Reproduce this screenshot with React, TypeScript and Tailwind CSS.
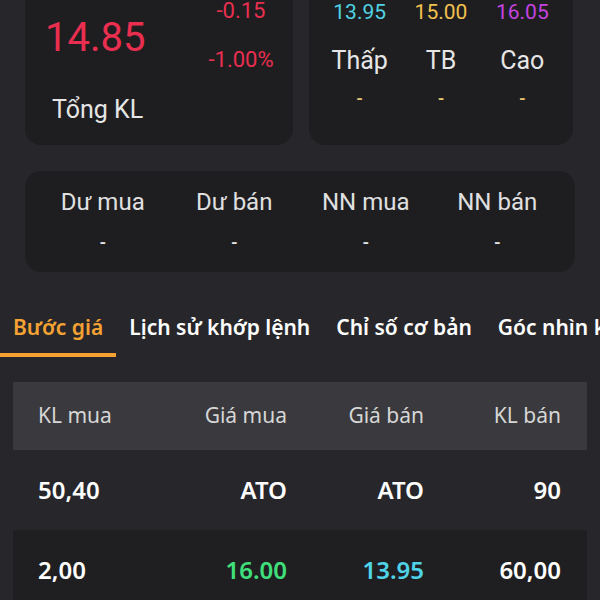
const stats = [
  { label: "Thấp", value: "13.95", color: "text-[#4fd3e3]" },
  { label: "TB", value: "15.00", color: "text-[#f2c14e]" },
  { label: "Cao", value: "16.05", color: "text-[#c543e0]" },
];

const extras = ["Dư mua", "Dư bán", "NN mua", "NN bán"];

const tabs = ["Bước giá", "Lịch sử khớp lệnh", "Chỉ số cơ bản", "Góc nhìn kỹ thuật"];

const rows = [
  { klMua: "50,40", giaMua: "ATO", giaBan: "ATO", klBan: "90", muaColor: "text-white", banColor: "text-white", dark: false },
  { klMua: "2,00", giaMua: "16.00", giaBan: "13.95", klBan: "60,00", muaColor: "text-[#3fe07c]", banColor: "text-[#4fd3e8]", dark: true },
];

export default function App() {
  return (
    <div className="h-[600px] w-[600px] overflow-hidden bg-[#27272b] font-['Roboto',sans-serif]">
      <div className="-mt-[30px] flex gap-4 pl-[25px] pr-[27px]">
        <div className="flex h-[175px] w-[268px] flex-col rounded-2xl bg-[#1e1e21] pl-[20px] pr-[12px] pt-[30px]">
          <div className="flex items-start justify-between">
            <span className="mt-[18px] text-[40px] leading-none text-[#ea2e4f]">14.85</span>
            <div className="flex w-[80px] flex-col items-center gap-[27px] text-[22px] leading-none text-[#ea2e4f]">
              <span>-0.15</span>
              <span>-1.00%</span>
            </div>
          </div>
          <span className="mt-[26px] pl-[7px] text-[25px] leading-none text-[#e6e6e6]">Tổng KL</span>
        </div>
        <div className="flex h-[175px] flex-1 flex-col rounded-2xl bg-[#1e1e21] px-[10px] pt-[32px]">
          <div className="grid grid-cols-3">
            {stats.map((s) => (
              <div key={s.label} className="flex flex-col items-center">
                <span className={`text-[21px] leading-none ${s.color}`}>{s.value}</span>
                <span className="mt-[25px] text-[25px] leading-none text-[#e6e6e6]">{s.label}</span>
                <span className="mt-[17px] text-[17px] font-bold leading-none text-[#e3c46e]">-</span>
              </div>
            ))}
          </div>
        </div>
      </div>

      <div className="mx-[25px] mt-[26px] grid h-[101px] grid-cols-4 rounded-2xl bg-[#1e1e21] px-3 pt-[19px]">
        {extras.map((e) => (
          <div key={e} className="flex flex-col items-center">
            <span className="text-[24px] leading-none text-[#e0e0e0]">{e}</span>
            <span className="mt-[20px] text-[17px] font-bold leading-none text-[#e0e0e0]">-</span>
          </div>
        ))}
      </div>

      <div className="mt-[40px] flex overflow-hidden whitespace-nowrap font-['Noto_Sans',sans-serif] text-[21px] font-semibold">
        {tabs.map((t, i) => (
          <div key={t} className="flex shrink-0 flex-col">
            <span className={`px-[13px] leading-[30px] ${i === 0 ? "text-[#f5a233]" : "text-white"}`}>{t}</span>
            <div className={`mt-[11px] h-[4px] ${i === 0 ? "bg-[#f5a233]" : "bg-transparent"}`} />
          </div>
        ))}
      </div>

      <div className="mx-[13px] mt-[25px] font-['Noto_Sans',sans-serif]">
        <div className="grid h-[68px] grid-cols-[130px_119px_137px_1fr] items-center bg-[#3a3a3e] pl-[25px] pr-[26px] text-[21px] text-[#d6d6d6]">
          <span>KL mua</span>
          <span className="text-right">Giá mua</span>
          <span className="text-right">Giá bán</span>
          <span className="text-right">KL bán</span>
        </div>
        {rows.map((r) => (
          <div
            key={r.klMua}
            className={`grid h-[80px] grid-cols-[130px_119px_137px_1fr] items-center pl-[25px] pr-[26px] text-[24px] font-semibold text-white ${r.dark ? "bg-[#1f1f22]" : ""}`}
          >
            <span>{r.klMua}</span>
            <span className={`text-right ${r.muaColor}`}>{r.giaMua}</span>
            <span className={`text-right ${r.banColor}`}>{r.giaBan}</span>
            <span className="text-right">{r.klBan}</span>
          </div>
        ))}
      </div>
    </div>
  );
}
